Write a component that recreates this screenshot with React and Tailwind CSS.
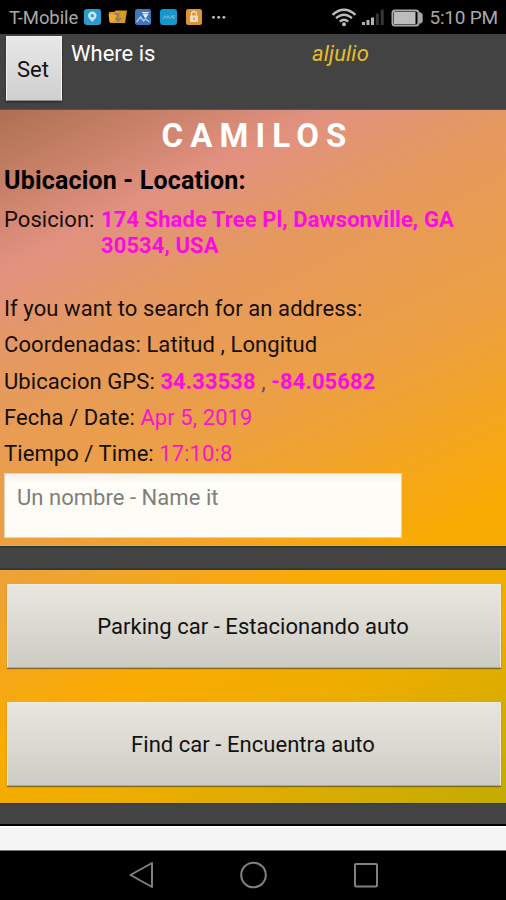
import React from "react";

function StatusBar() {
  return (
    <div className="flex h-[34px] items-center bg-black pl-[9px] pr-2 text-[#a9a9a9]">
      <span className="w-[77px] whitespace-nowrap pt-px text-[18.5px] leading-[34px] tracking-[-0.1px]">T-Mobile</span>
      <svg width="146" height="34" viewBox="85 0 146 34" className="shrink-0">
        <rect x="85" y="9" width="17" height="16" rx="3" fill="#2a9bcd" />
        <path d="M93.300 22c-2-2.600-4.300-4.300-4.300-6.300a4.300 4.300 0 0 1 8.600 0c0 2-2.300 3.700-4.300 6.300z" fill="#c5e5f0" />
        <circle cx="93.300" cy="15.700" r="1.600" fill="#2a9bcd" />
        <path d="M110 12h5l2-1.500h11l-2 12.500h-15z" fill="#d99a1f" />
        <path d="M109.500 14h7v7l-6 1z" fill="#f0ae2d" />
        <path d="M115.500 14h5M119 14v7M116.500 18l2.500 3 3-3" stroke="#8b806c" strokeWidth="1.800" fill="none" />
        <rect x="136" y="9" width="16" height="16" rx="2.500" fill="#3c76bd" />
        <path d="M143 12.500h7M144 14h5l-2.500 4z" stroke="#dbe7f2" strokeWidth="1" fill="#dbe7f2" />
        <path d="M137.500 22l4-5 3 4 2-2 4 3" stroke="#a9c9e7" strokeWidth="1.400" fill="none" />
        <rect x="161" y="9" width="17" height="16" rx="3" fill="#1697cc" />
        <path d="M164.500 19l1-3.500 2 3 1.500-3 1.500 3M171 18.500l2-3 1 3M175 15v4" stroke="#73bdd9" strokeWidth="1" fill="none" />
        <rect x="187" y="9" width="16" height="16" rx="2.500" fill="#db9438" />
        <rect x="191" y="15.500" width="8" height="6.500" rx="1" fill="#f2dcc0" />
        <path d="M192.500 16v-2a2.500 2.500 0 0 1 5 0v2" stroke="#f2dcc0" strokeWidth="1.300" fill="none" />
        <path d="M195 17.500v2.500" stroke="#db9438" strokeWidth="1.400" />
        <circle cx="214.500" cy="17.300" r="1.400" fill="#c4c4c4" />
        <circle cx="219.700" cy="17.300" r="1.400" fill="#c4c4c4" />
        <circle cx="224.900" cy="17.300" r="1.400" fill="#c4c4c4" />
      </svg>
      <svg width="96" height="34" viewBox="332 0 96 34" className="ml-[101px] shrink-0">
        <g fill="none" stroke="#bdbdbd" strokeWidth="2.300">
          <path d="M333.500 14.800q11.500-10 23 0" />
          <path d="M337 18.200q8-7 16 0" />
          <path d="M340.700 21.600q4.300-3.800 8.600 0" />
        </g>
        <circle cx="345" cy="24.300" r="2" fill="#bdbdbd" />
        <path d="M363 22h3v3h-3zM367.500 20h3v5h-3zM372 17.500h3V25h-3z" fill="#b5b5b5" />
        <path d="M376.800 13.500h3V25h-3zM381.700 9.500h3V25h-3z" fill="#353535" />
        <rect x="393.500" y="10.500" width="26" height="15" rx="2.500" fill="none" stroke="#a8a8a8" strokeWidth="2" />
        <path d="M420 12.500h2l1.700 2v7l-1.700 2h-2" fill="#a8a8a8" />
        <rect x="395" y="12" width="21.500" height="12" fill="#bcbcbc" />
      </svg>
      <span className="ml-[2px] whitespace-nowrap pt-px text-[19px] leading-[34px] tracking-[-0.2px]">5:10 PM</span>
    </div>
  );
}

function Header() {
  return (
    <div className="flex h-[76px] border-b border-[#5d5149] bg-[#434343] text-[22px] leading-[26px]">
      <button className="ml-[6px] mt-[2px] h-[65px] w-[56px] border border-[#f2f2f2] border-b-[#8c8c8c] bg-gradient-to-b from-[#e8e8e8] to-[#cfcfcf] pr-[2px] pt-[3px] text-[#111] shadow-[0_1px_2px_#222]">
        Set
      </button>
      <span className="ml-[9px] mt-[7px] w-[241px] text-white">Where is</span>
      <span className="mt-[7px] italic tracking-[0.1px] text-[#e4be2b]">aljulio</span>
    </div>
  );
}

function Row({ label, children }) {
  return (
    <div className="h-[36.3px] whitespace-pre leading-[36px] tracking-[0.08px]">
      {label}
      {children}
    </div>
  );
}

function ActionButton({ children }) {
  return (
    <button className="block h-[84px] w-[494px] border border-[#eeebe3] border-b-[#aaa797] bg-gradient-to-b from-[#e9e6de] to-[#cdccc4] pr-[2px] pt-px text-[22px] tracking-[0.04px] text-[#111] shadow-[0_1px_1px_rgba(90,80,40,0.7)]">
      {children}
    </button>
  );
}

function NavBar() {
  return (
    <div className="h-[49px] bg-black">
      <svg width="506" height="49" viewBox="0 851 506 49" fill="none" stroke="#808080" strokeWidth="2">
        <path d="M130.500 875l21.500-12v24z" strokeLinejoin="round" />
        <circle cx="253.500" cy="875" r="12.300" />
        <rect x="355" y="864" width="22" height="22.500" rx="1" />
      </svg>
    </div>
  );
}

export default function App() {
  return (
    <div className="flex h-[900px] w-[506px] flex-col overflow-hidden bg-black font-['Roboto','Liberation_Sans',sans-serif]">
      <StatusBar />
      <Header />
      <main className="flex h-[693px] flex-col bg-[linear-gradient(154deg,#ad7050_0%,#e29180_17%,#e5995f_28%,#eca043_46%,#faab02_68%,#eead00_79%,#c3ac00_100%)] text-[22px] text-[#150d08]">
        <section className="h-[436px] px-1">
          <h1 className="h-[53px] pl-[9px] text-center text-[33px] font-bold leading-[52px] tracking-[7.1px] text-white">CAMILOS</h1>
          <h2 className="h-[35px] text-[25px] font-bold leading-[36px] tracking-[0.18px] text-black">Ubicacion - Location:</h2>
          <div className="flex h-[93px] pt-[9px] leading-[26px] tracking-[0.07px]">
            <span className="w-[97px] shrink-0">Posicion:</span>
            <span className="whitespace-pre font-bold text-[#fb0be4]">{"174 Shade Tree Pl, Dawsonville, GA\n30534, USA"}</span>
          </div>
          <Row label="If you want to search for an address:" />
          <Row label="Coordenadas: Latitud , Longitud" />
          <Row label="Ubicacion GPS: ">
            <span className="font-bold text-[#fb0be4]">34.33538</span>
            <span className="text-[#5548a8]"> , </span>
            <span className="font-bold text-[#fb0be4]">-84.05682</span>
          </Row>
          <Row label="Fecha / Date: ">
            <span className="text-[#f814cf]">Apr 5, 2019</span>
          </Row>
          <Row label="Tiempo / Time: ">
            <span className="text-[#f814cf]">17:10:8</span>
          </Row>
          <div className="mt-px h-[65px] w-[398px] border border-[#e3d3b5] bg-gradient-to-b from-[#f3f2ec] via-[#fefcf6] via-15% to-[#fefcf6] pl-3 pt-[10px] leading-[28px] tracking-[0.04px] text-[#7e7e7c]">
            Un nombre - Name it
          </div>
        </section>
        <div className="h-6 border-y-2 border-[#2c3c40] bg-[#434343]" />
        <section className="flex flex-col gap-[34px] pl-[7px] pt-[14px]">
          <ActionButton>Parking car - Estacionando auto</ActionButton>
          <ActionButton>Find car - Encuentra auto</ActionButton>
        </section>
      </main>
      <div className="h-[23px] border-b-2 border-t border-b-black border-t-[#303733] bg-[#434343]" />
      <div className="h-[25px] border-b border-t-2 border-b-[#777] border-t-white bg-[#f5f5f5]" />
      <NavBar />
    </div>
  );
}
